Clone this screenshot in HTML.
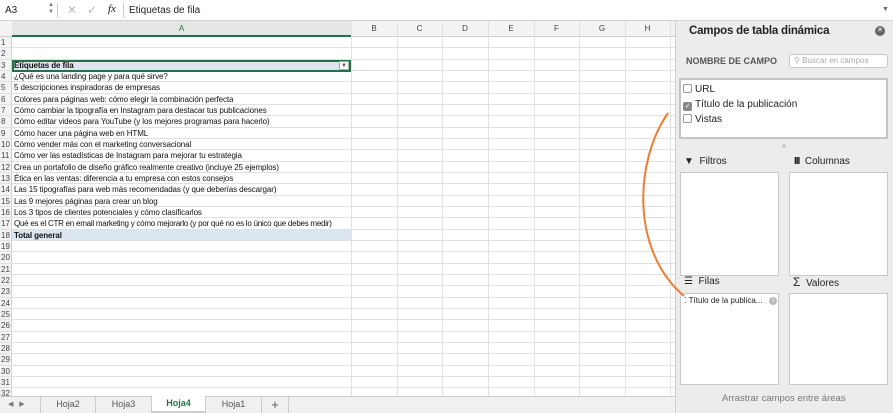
<!DOCTYPE html>
<html><head><meta charset="utf-8"><style>
*{box-sizing:border-box;margin:0;padding:0}
body{width:893px;height:413px;overflow:hidden;background:#fff;font-family:"Liberation Sans",Arial,sans-serif;position:relative;font-size:9px;color:#222}
.abs{position:absolute}
.fb{left:0;top:0;width:893px;height:21px;background:#fff;border-bottom:1px solid #d4d4d4}
.grid{left:0;top:21px;width:675px;height:375px;overflow:hidden}
.row{position:absolute;left:0;width:675px;height:11.33px;border-bottom:1px solid #e1e1e1}
.rn{position:absolute;left:0;width:12px;height:100%;background:#f3f3f3;border-right:1px solid #d0d0d0;font-size:8px;color:#444;padding-left:1px;line-height:11px}
.cell{position:absolute;left:14px;top:0;font-size:8px;line-height:11px;white-space:nowrap;color:#111;letter-spacing:-0.1px}
.vl{position:absolute;top:0;width:1px;height:375px;background:#e1e1e1}
.panel{left:675px;top:21px;width:218px;height:392px;background:#ececec;border-left:1px solid #cfcfcf}
.box{position:absolute;background:#fff;border:1px solid #c8c8c8}
.lbl{position:absolute;font-size:10px;color:#222}
.cb{display:inline-block;width:9px;height:9px;border:1px solid #999;border-radius:2px;background:#fff;vertical-align:-1px;margin-right:3px}
</style></head><body>
<div class="abs fb">
 <div class="abs" style="left:5px;top:5px;font-size:10px">A3</div>
 <div class="abs" style="left:48px;top:2px;font-size:6px;color:#777;line-height:7px">▲<br>▼</div>
 <div class="abs" style="left:57px;top:3px;width:1px;height:15px;background:#ccc"></div>
 <div class="abs" style="left:67px;top:3px;font-size:12px;color:#bbb">✕</div>
 <div class="abs" style="left:87px;top:3px;font-size:12px;color:#bbb">✓</div>
 <div class="abs" style="left:108px;top:3px;font-size:11px;font-style:italic;font-family:'Liberation Serif',serif">fx</div>
 <div class="abs" style="left:123px;top:3px;width:1px;height:15px;background:#ccc"></div>
 <div class="abs" style="left:129px;top:5px;font-size:10px">Etiquetas de fila</div>
 <div class="abs" style="left:882px;top:6px;font-size:7px;color:#666">▼</div>
</div>
<div class="abs grid">
 <div class="abs" style="left:0;top:0;width:675px;height:16px;background:#f3f3f3;border-bottom:1px solid #d0d0d0"></div>
 <div class="abs" style="left:12px;top:0;width:339px;height:16px;background:#e6e6e6;border-bottom:2px solid #217346;text-align:center;font-size:8px;line-height:15px;color:#217346">A</div>
 <div class="abs" style="left:351px;top:0;width:46px;text-align:center;font-size:8px;line-height:15px;color:#444">B</div>
 <div class="abs" style="left:397px;top:0;width:45px;text-align:center;font-size:8px;line-height:15px;color:#444">C</div>
 <div class="abs" style="left:442px;top:0;width:46px;text-align:center;font-size:8px;line-height:15px;color:#444">D</div>
 <div class="abs" style="left:488px;top:0;width:46px;text-align:center;font-size:8px;line-height:15px;color:#444">E</div>
 <div class="abs" style="left:534px;top:0;width:45px;text-align:center;font-size:8px;line-height:15px;color:#444">F</div>
 <div class="abs" style="left:579px;top:0;width:46px;text-align:center;font-size:8px;line-height:15px;color:#444">G</div>
 <div class="abs" style="left:625px;top:0;width:45px;text-align:center;font-size:8px;line-height:15px;color:#444">H</div>
 <div id="rows"></div>
 <div class="vl" style="left:351px"></div><div class="vl" style="left:397px"></div><div class="vl" style="left:442px"></div><div class="vl" style="left:488px"></div><div class="vl" style="left:534px"></div><div class="vl" style="left:579px"></div><div class="vl" style="left:625px"></div><div class="vl" style="left:670px"></div>
</div>
<script>
var t=["","","Etiquetas de fila","¿Qué es una landing page y para qué sirve?","5 descripciones inspiradoras de empresas","Colores para páginas web: cómo elegir la combinación perfecta","Cómo cambiar la tipografía en Instagram para destacar tus publicaciones","Cómo editar videos para YouTube (y los mejores programas para hacerlo)","Cómo hacer una página web en HTML","Cómo vender más con el marketing conversacional","Cómo ver las estadísticas de Instagram para mejorar tu estrategia","Crea un portafolio de diseño gráfico realmente creativo (incluye 25 ejemplos)","Ética en las ventas: diferencia a tu empresa con estos consejos","Las 15 tipografías para web más recomendadas (y que deberías descargar)","Las 9 mejores páginas para crear un blog","Los 3 tipos de clientes potenciales y cómo clasificarlos","Qué es el CTR en email marketing y cómo mejorarlo (y por qué no es lo único que debes medir)","Total general"];
var h="";
for(var i=1;i<=32;i++){var y=16+(i-1)*11.33;var tx=t[i-1]||"";var st="";
if(i==3||i==18)st="background:linear-gradient(to right,transparent 12px,#dce6f1 12px,#dce6f1 351px,transparent 351px);";
var bold=(i==3||i==18)?"font-weight:bold;":"";
var ls=(i==17)?"letter-spacing:-0.25px;":"";
h+='<div class="row" style="top:'+y+'px;'+st+'"><div class="rn">'+i+'</div><div class="cell" style="'+bold+ls+'">'+tx+'</div></div>';}
document.getElementById("rows").innerHTML=h+'<div class="abs" style="left:12px;top:38.7px;width:339px;height:12.3px;border:2px solid #217346"></div><div class="abs" style="left:339px;top:40px;width:10px;height:9px;background:#fff;border:1px solid #aaa;font-size:6px;text-align:center;line-height:8px;color:#555">▼</div>';
</script>
<div class="abs" style="left:0;top:396px;width:675px;height:17px;background:#f0f0f0;border-top:1px solid #ccc">
 <div class="abs" style="left:8px;top:3px;font-size:7px;color:#777">◀ &nbsp; ▶</div>
 <div class="abs" style="left:40px;top:0;width:55px;height:16px;border-left:1px solid #ccc;text-align:center;font-size:9px;line-height:15px;color:#555">Hoja2</div>
 <div class="abs" style="left:95px;top:0;width:56px;height:16px;border-left:1px solid #ccc;text-align:center;font-size:9px;line-height:15px;color:#555">Hoja3</div>
 <div class="abs" style="left:151px;top:-1px;width:55px;height:17px;background:#fff;border-left:1px solid #ccc;border-right:1px solid #ccc;text-align:center;font-size:9px;line-height:15px;color:#217346;font-weight:bold;border-bottom:2px solid #ccc">Hoja4</div>
 <div class="abs" style="left:206px;top:0;width:56px;height:16px;text-align:center;font-size:9px;line-height:15px;color:#555;border-right:1px solid #ccc">Hoja1</div>
 <div class="abs" style="left:262px;top:0;width:27px;height:16px;text-align:center;font-size:13px;line-height:15px;color:#555;border-right:1px solid #ccc">+</div>
</div>
<div class="abs panel">
 <div class="lbl" style="left:13px;top:4px;font-size:11.5px;color:#222;font-weight:bold;letter-spacing:-0.2px">Campos de tabla dinámica</div>
 <div class="abs" style="left:199px;top:5px;width:10px;height:10px;border-radius:50%;background:#666;color:#fff;font-size:7px;text-align:center;line-height:10px">✕</div>
 <div class="lbl" style="left:10px;top:35px;font-size:9px;font-weight:bold;color:#555">NOMBRE DE CAMPO</div>
 <div class="box" style="left:113px;top:33px;width:99px;height:14px;border-radius:3px;font-size:8px;color:#aaa;padding-left:4px;line-height:12px">⚲ Buscar en campos</div>
 <div class="box" style="left:3px;top:57px;width:209px;height:61px;border:2px solid #c4c4c4">
  <div class="lbl" style="left:2px;top:4px"><span class="cb"></span>URL</div>
  <div class="lbl" style="left:2px;top:19px"><span class="cb" style="background:#888;border-color:#888;color:#fff;font-size:7px;line-height:7px;text-align:center">✓</span>Título de la publicación</div>
  <div class="lbl" style="left:2px;top:34px"><span class="cb"></span>Vistas</div>
 </div>
 <div class="abs" style="left:106px;top:123px;width:4px;height:4px;border-radius:50%;background:#ccc"></div>
 <div class="lbl" style="left:8px;top:135px">▼&nbsp; Filtros</div>
 <div class="lbl" style="left:118px;top:135px"><b style="letter-spacing:-1px">III</b>&nbsp; Columnas</div>
 <div class="box" style="left:4px;top:151px;width:99px;height:104px"></div>
 <div class="box" style="left:113px;top:151px;width:99px;height:104px"></div>
 <div class="lbl" style="left:8px;top:255px">☰&nbsp; Filas</div>
 <div class="lbl" style="left:117px;top:254px"><span style="font-size:12px">Σ</span>&nbsp; Valores</div>
 <div class="box" style="left:4px;top:272px;width:99px;height:92px"><div class="lbl" style="left:3px;top:2px;font-size:8px">⁚ Título de la publica...</div><div class="abs" style="left:88px;top:3px;width:8px;height:8px;border-radius:50%;background:#bbb;color:#fff;font-size:6px;text-align:center;line-height:8px">i</div></div>
 <div class="box" style="left:113px;top:272px;width:99px;height:92px"></div>
 <div class="lbl" style="left:46px;top:372px;font-size:9.5px;color:#777">Arrastrar campos entre áreas</div>
</div>
<svg class="abs" style="left:0;top:0" width="893" height="413"><path d="M668 113 C635 160 630 250 684 296" fill="none" stroke="#f07c30" stroke-width="2"/></svg>
</body></html>
